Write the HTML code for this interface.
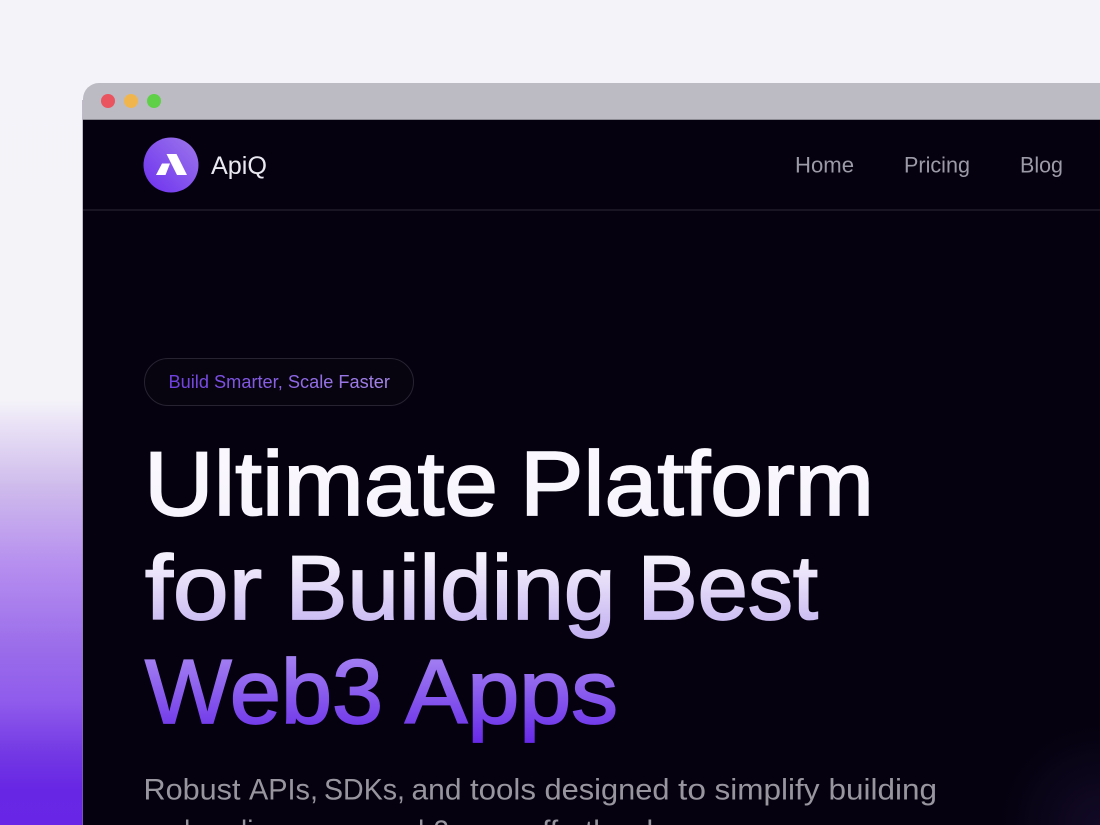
<!DOCTYPE html>
<html><head><meta charset="utf-8"><style>
html,body{margin:0;padding:0;width:1100px;height:825px;overflow:hidden;background:#f4f3f9}
svg{display:block;position:absolute;left:0;top:0}
text{font-family:"Liberation Sans",sans-serif}
</style></head><body>
<svg width="1100" height="825" viewBox="0 0 1100 825" xmlns="http://www.w3.org/2000/svg">
<defs>
<linearGradient id="bg" gradientUnits="userSpaceOnUse" x1="0" y1="0" x2="0" y2="825"><stop offset="0" stop-color="#f4f3f9"/><stop offset=".485" stop-color="#f4f3f8"/><stop offset=".507" stop-color="#ece6f7"/><stop offset=".588" stop-color="#cfbcec"/><stop offset=".688" stop-color="#b58def"/><stop offset=".788" stop-color="#9a6cea"/><stop offset=".851" stop-color="#8f5bec"/><stop offset=".912" stop-color="#7439e4"/><stop offset=".958" stop-color="#6726e4"/><stop offset="1" stop-color="#6825e6"/></linearGradient>
<linearGradient id="h2" gradientUnits="userSpaceOnUse" x1="0" y1="440" x2="0" y2="635"><stop offset="0" stop-color="#fbf9fe"/><stop offset=".6" stop-color="#f5f1fc"/><stop offset="1" stop-color="#c4b2f1"/></linearGradient>
<linearGradient id="h3" gradientUnits="userSpaceOnUse" x1="0" y1="655" x2="0" y2="742"><stop offset="0" stop-color="#a482f2"/><stop offset="1" stop-color="#672ae8"/></linearGradient>
<linearGradient id="logo" x1="0" y1="1" x2="1" y2="0"><stop offset="0" stop-color="#6c2ff0"/><stop offset="1" stop-color="#9d78ea"/></linearGradient>
<linearGradient id="tag" x1="0" y1="0" x2="1" y2="0"><stop offset="0" stop-color="#6e3fe0"/><stop offset="1" stop-color="#a385e6"/></linearGradient>
<radialGradient id="glow" gradientUnits="userSpaceOnUse" cx="1100" cy="825" r="100"><stop offset="0" stop-color="#120a26"/><stop offset="1" stop-color="#120a26" stop-opacity="0"/></radialGradient>
</defs>
<rect width="1100" height="825" fill="url(#bg)"/>
<rect x="82" y="100" width="1" height="725" fill="#8a8494" opacity=".5"/>
<path d="M83 825V99a16 16 0 0 1 16-16H1100V825Z" fill="#bcbbc4"/>
<rect x="83" y="119" width="1017" height="706" fill="#05010f"/>
<rect x="83" y="119" width="1017" height="1" fill="#8d8c95"/>
<rect x="900" y="695" width="200" height="130" fill="url(#glow)"/>
<circle cx="108" cy="101" r="7" fill="#e9545f"/>
<circle cx="131" cy="101" r="7" fill="#f0b64d"/>
<circle cx="154" cy="101" r="7" fill="#5fd048"/>
<circle cx="171" cy="165" r="27.500" fill="url(#logo)"/>
<path d="M166.500 154H176.500L187 175H177Z" fill="#fff"/>
<path d="M162 163.500H170L165.500 175H156Z" fill="#fff"/>
<text x="211" y="174" font-size="25" fill="#e9e7ef" textLength="56" lengthAdjust="spacingAndGlyphs">ApiQ</text>
<text x="795" y="172.500" font-size="22" fill="#9d9aa8" textLength="59" lengthAdjust="spacingAndGlyphs">Home</text>
<text x="904" y="172.500" font-size="22" fill="#9d9aa8" textLength="66" lengthAdjust="spacingAndGlyphs">Pricing</text>
<text x="1020" y="172.500" font-size="22" fill="#9d9aa8" textLength="43" lengthAdjust="spacingAndGlyphs">Blog</text>
<rect x="83" y="209" width="1017" height="2" fill="#191522"/>
<rect x="144.500" y="358.500" width="269" height="47" rx="23.500" fill="#07030f" stroke="#272331"/>
<text x="168.500" y="388" font-size="18" fill="url(#tag)" textLength="221.500" lengthAdjust="spacingAndGlyphs">Build Smarter, Scale Faster</text>
<g font-size="91" stroke-width="1.800">
<g fill="url(#h2)" stroke="url(#h2)">
<text x="144" y="515" textLength="354" lengthAdjust="spacingAndGlyphs">Ultimate</text>
<text x="520" y="515" textLength="354" lengthAdjust="spacingAndGlyphs">Platform</text>
<text x="145" y="619" textLength="117" lengthAdjust="spacingAndGlyphs">for</text>
<text x="285.500" y="619" textLength="330" lengthAdjust="spacingAndGlyphs">Building</text>
<text x="637.500" y="619" textLength="180.500" lengthAdjust="spacingAndGlyphs">Best</text>
</g>
<g fill="url(#h3)" stroke="url(#h3)">
<text x="145" y="723" textLength="238" lengthAdjust="spacingAndGlyphs">Web3</text>
<text x="405" y="723" textLength="213" lengthAdjust="spacingAndGlyphs">Apps</text>
</g>
</g>
<g font-size="30" fill="#98959f">
<text x="143.500" y="799.500" textLength="97" lengthAdjust="spacingAndGlyphs">Robust</text>
<text x="249" y="799.500" textLength="69" lengthAdjust="spacingAndGlyphs">APIs,</text>
<text x="324" y="799.500" textLength="81" lengthAdjust="spacingAndGlyphs">SDKs,</text>
<text x="411.500" y="799.500" textLength="50" lengthAdjust="spacingAndGlyphs">and</text>
<text x="470" y="799.500" textLength="66" lengthAdjust="spacingAndGlyphs">tools</text>
<text x="544.500" y="799.500" textLength="125" lengthAdjust="spacingAndGlyphs">designed</text>
<text x="678" y="799.500" textLength="28" lengthAdjust="spacingAndGlyphs">to</text>
<text x="714.500" y="799.500" textLength="105" lengthAdjust="spacingAndGlyphs">simplify</text>
<text x="828.500" y="799.500" textLength="108.500" lengthAdjust="spacingAndGlyphs">building</text>
<text x="144" y="841" textLength="305" lengthAdjust="spacingAndGlyphs">and scaling secure web3</text>
<text x="452" y="841">apps effortlessly</text>
</g>
</svg>
</body></html>
